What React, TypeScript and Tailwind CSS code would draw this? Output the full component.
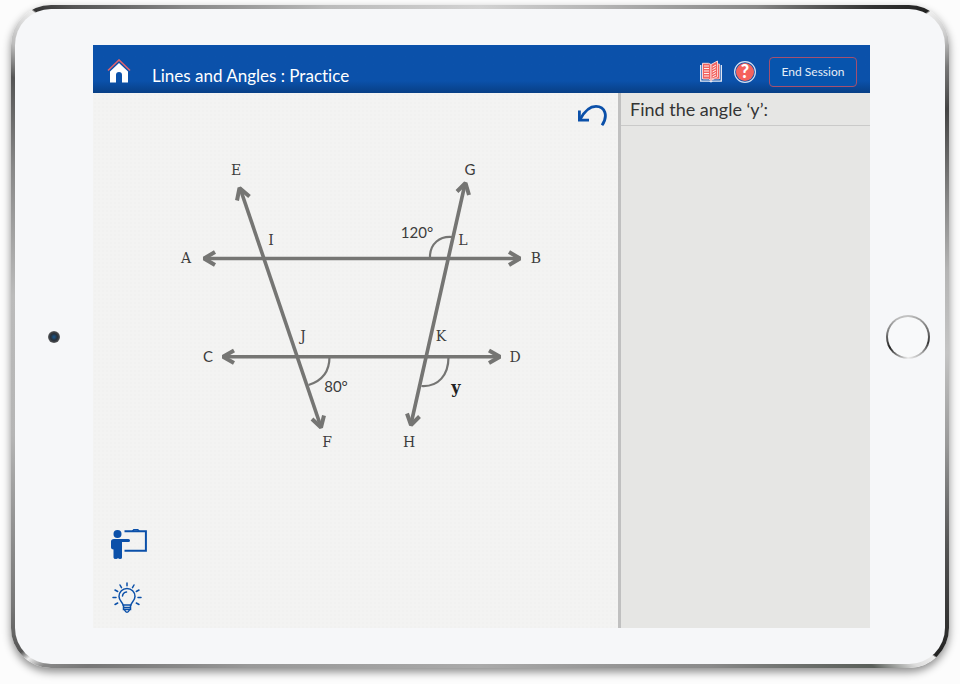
import React from 'react';

const INK = '#757573';
const BLUE = '#0b50a9';

function HomeIcon() {
  return (
    <svg viewBox="0 0 24 24" className="h-6 w-6" aria-hidden="true">
      <path d="M1 11.5 12 1 23 11.5" fill="none" stroke="#e0626d" strokeWidth="1.6" />
      <path d="M12 4 3 12.5V23.500H9V16a3 3 0 0 1 6 0V23.500h6V12.500z" fill="#fff" />
    </svg>
  );
}

function BookIcon() {
  return (
    <svg viewBox="0 0 24 24" className="h-6 w-6" aria-hidden="true">
      <path d="M1.700 5v16.200h8.800l1.500.6 1.500-.6h8.800V5" fill={BLUE} stroke="#e9edf8" strokeWidth="1.3" />
      <path d="M3.500 3.300h6L12 4.500V20.500L9.500 19h-6z" fill="#f2635f" stroke="#fbd5d6" strokeWidth="1" />
      <path d="M12 4.500 18.500 1V17L12 20.500z" fill="#f2635f" stroke="#fbd5d6" strokeWidth="1" />
      <path d="M18.500 4H20.500v15h-8l6-2z" fill="#f2635f" stroke="#fbd5d6" strokeWidth=".8" />
      <path
        d="M5 6h5M5 8.500h5M5 11h5M5 13.500h5M5 16h5M13.500 7l3.500-2M13.500 9.500l3.500-2M13.500 12l3.500-2M13.500 14.500l3.500-2M13.500 17l3.500-2"
        stroke="#fff"
        strokeWidth=".9"
      />
    </svg>
  );
}

function HelpIcon() {
  return (
    <svg viewBox="0 0 24 24" className="h-6 w-6" aria-hidden="true">
      <circle cx="12" cy="12" r="10.400" fill={BLUE} stroke="#d5e0f3" strokeWidth="1.200" />
      <circle cx="12" cy="12" r="9" fill="#f5625d" />
      <text x="12" y="18" textAnchor="middle" fill="#fff" className="font-['Lato',sans-serif] text-[18px] font-black">
        ?
      </text>
    </svg>
  );
}

function UndoIcon() {
  return (
    <svg viewBox="0 0 32 28" className="h-7 w-8" fill="none" stroke={BLUE} strokeWidth="2.8" aria-hidden="true">
      <path d="M3.400 9.500v9.600H13" />
      <path d="M4 18.500C9 9 14 5.300 20 5.300c9 0 12.500 9.500 6 19" />
    </svg>
  );
}

function TeacherIcon() {
  return (
    <svg viewBox="0 0 36 32" className="h-8 w-9" aria-hidden="true">
      <circle cx="6.500" cy="6" r="4" fill={BLUE} />
      <path d="M3 11h14.500a1.500 1.500 0 0 1 0 3H11v15.500q0 1.500-2 1.500-1.500 0-2-1-.5 1-2 1-2.500 0-2.500-1.500V21.500q-2.500 0-2.500-2v-6Q0 11 3 11z" fill={BLUE} />
      <path d="M13.500 3.300H34.900V22.800H13.500" fill="none" stroke={BLUE} strokeWidth="2" />
      <path d="M21.500 3.300l1.300-1.600h4l1.300 1.600" fill="none" stroke={BLUE} strokeWidth="1.500" />
    </svg>
  );
}

function BulbIcon() {
  return (
    <svg viewBox="0 0 32 32" className="h-8 w-8" fill="none" stroke={BLUE} strokeWidth="1.500" strokeLinecap="round" aria-hidden="true">
      <path d="M12 23c0-2.500-4-4-4-8.500a8 8 0 0 1 16 0c0 4.500-4 6-4 8.500z" />
      <path d="M12.500 23.500v4h7v-4M12.500 25.500h7M13.500 28q2.500 4.500 5 0M11.500 14q.5-3.500 4-4" />
      <path d="M16 1v2.800M9 3l1.500 2.600M23 3l-1.500 2.600M4 8l2.700 1.500M28 8l-2.700 1.500M2 15.500h3M27 15.500h3M4 22.500l2.700-1.500M28 22.500l-2.700-1.500" />
    </svg>
  );
}

const serifLabels = [
  { t: 'E', x: 236, y: 175 },
  { t: 'I', x: 271, y: 245 },
  { t: 'L', x: 463, y: 245 },
  { t: 'A', x: 186, y: 263 },
  { t: 'B', x: 536, y: 263 },
  { t: 'J', x: 303, y: 341 },
  { t: 'K', x: 441, y: 341 },
  { t: 'D', x: 515, y: 362 },
  { t: 'F', x: 327, y: 447 },
  { t: 'H', x: 409, y: 447 },
];

const sansLabels = [
  { t: 'G', x: 470, y: 175 },
  { t: 'C', x: 208, y: 362 },
  { t: '120°', x: 417, y: 238 },
  { t: '80°', x: 336, y: 392 },
];

function Diagram() {
  return (
    <svg
      viewBox="165 150 381 310"
      className="mx-auto w-full max-w-[381px]"
      role="img"
      aria-label="Lines AB and CD cut by transversals EF and GH"
    >
      <g fill="none" stroke={INK} strokeWidth="3.600">
        <path d="M205 258.500H518" />
        <path d="M224 356.800H498" />
        <path d="M240 188 321 427" />
        <path d="M465 184 411 424" />
      </g>
      <g fill="none" stroke={INK} strokeWidth="4" strokeLinejoin="bevel">
        <path d="M215 252 204 258.500l11 6.500" />
        <path d="M509 252l11 6.500-11 6.500" />
        <path d="M234 350.500l-11 6.300 11 6.300" />
        <path d="M489 350.500l11 6.300-11 6.300" />
        <path d="M237 200.500 239.500 188l10 8.500" />
        <path d="M457 191.500l8.500-8.500 3.500 12" />
        <path d="M312 419l9 8.500 3-12" />
        <path d="M407 413.500l4 11.500 8.500-8.500" />
      </g>
      <g fill="none" stroke={INK} strokeWidth="2.200">
        <path d="M430 258V255c1-11 9-19 22-18" />
        <path d="M329.500 357c0 15-8 24-21 28" />
        <path d="M448.500 357c0 18-10 30-27 29" />
      </g>
      <g fill="#3c3c3c" textAnchor="middle">
        {serifLabels.map((l) => (
          <text key={l.t} x={l.x} y={l.y} className="font-['DejaVu_Serif',serif] text-[14px]">
            {l.t}
          </text>
        ))}
        {sansLabels.map((l) => (
          <text key={l.t} x={l.x} y={l.y} className="font-['Lato',sans-serif] text-[15px]">
            {l.t}
          </text>
        ))}
        <text x="456" y="393" fill="#222" className="font-['DejaVu_Serif',serif] text-[16px] font-bold">
          y
        </text>
      </g>
    </svg>
  );
}

export default function App() {
  return (
    <div className="flex min-h-screen bg-[#fcfcfc] px-[11px] pt-[5px] pb-4 font-['Lato',sans-serif]">
      <div className="flex flex-1 rounded-[40px] bg-[conic-gradient(#d2d2d2_0deg,#b5b5b5_20deg,#888_40deg,#333_50deg,#222_54deg,#eee_54.200deg,#ccc_57deg,#777_60deg,#444_64deg,#888_74deg,#b5b5b5_82deg,#c4c4c4_92deg,#999_103deg,#555_114deg,#222_125deg,#eee_125.200deg,#ddd_127deg,#5a5f5a_130deg,#8a8a8a_145deg,#aaa_180deg,#999_215deg,#777_230deg,#888_233deg,#eee_234.500deg,#555_235.500deg,#777_240deg,#b5b5b5_258deg,#bbb_275deg,#888_290deg,#555_299deg,#bbb_302deg,#eee_306deg,#333_306.200deg,#555_309deg,#888_318deg,#bbb_335deg,#d2d2d2_360deg)] p-1 shadow-[0_4px_9px_0_rgba(0,0,0,0.45)]">
        <div className="flex flex-1 rounded-[36px] bg-[#f6f7f9] py-9">
          <div className="flex w-[78px] shrink-0 items-center justify-center">
            <span className="h-3 w-3 rounded-full bg-[radial-gradient(circle,#17578f_0%,#27303a_40%,#46484b_60%,#77797b_75%)]" />
          </div>

          <main className="flex min-w-0 flex-1 flex-col">
            <header className="flex h-12 items-center bg-linear-to-b from-[#0b51aa] from-75% to-[#083f85] pr-[13px] pl-[14px]">
              <button type="button" aria-label="Home" className="mt-1">
                <HomeIcon />
              </button>
              <h1 className="mt-[14px] ml-[21px] text-[17px] leading-6 text-white [font-variant-ligatures:none]">
                Lines and Angles : Practice
              </h1>
              <div className="mt-[5px] ml-auto flex items-center">
                <button type="button" aria-label="Lesson book">
                  <BookIcon />
                </button>
                <button type="button" aria-label="Help" className="ml-[10px]">
                  <HelpIcon />
                </button>
                <button
                  type="button"
                  className="ml-3 h-[30px] w-[88px] rounded border border-[#a5506f] bg-[#0754ad] text-xs text-[#e6edf7]"
                >
                  End Session
                </button>
              </div>
            </header>

            <div className="flex flex-1">
              <section className="flex min-w-0 flex-1 flex-col bg-[#f3f3f2] bg-[radial-gradient(#f1f1f0_1px,transparent_1px)] bg-[size:4px_4px]">
                <button type="button" aria-label="Undo" className="mt-2 mr-[10px] self-end">
                  <UndoIcon />
                </button>
                <div className="mt-[21px] flex">
                  <Diagram />
                </div>
                <div className="mt-auto flex flex-col items-start gap-[22px] pb-[14px] pl-[18px]">
                  <button type="button" aria-label="Show lesson">
                    <TeacherIcon />
                  </button>
                  <button type="button" aria-label="Hint">
                    <BulbIcon />
                  </button>
                </div>
              </section>

              <aside className="w-[252px] shrink-0 border-l-[3px] border-[#c0c0c0] bg-[#e6e6e4]">
                <h2 className="h-[33px] border-b border-[#cacac9] pl-[9px] text-lg leading-8 text-[#343434]">
                  Find the angle ‘y’:
                </h2>
              </aside>
            </div>
          </main>

          <div className="flex w-[75px] shrink-0 items-center justify-center">
            <button
              type="button"
              aria-label="Home button"
              className="h-[44px] w-[44px] rounded-full bg-[conic-gradient(#c4c4c4,#999_40deg,#555_90deg,#333_105deg,#aaa_140deg,#eee_180deg,#999_205deg,#222_240deg,#777_280deg,#bbb_330deg,#c4c4c4)] p-[2px]"
            >
              <span className="block h-full w-full rounded-full bg-[#f8f9fa]" />
            </button>
          </div>
        </div>
      </div>
    </div>
  );
}
